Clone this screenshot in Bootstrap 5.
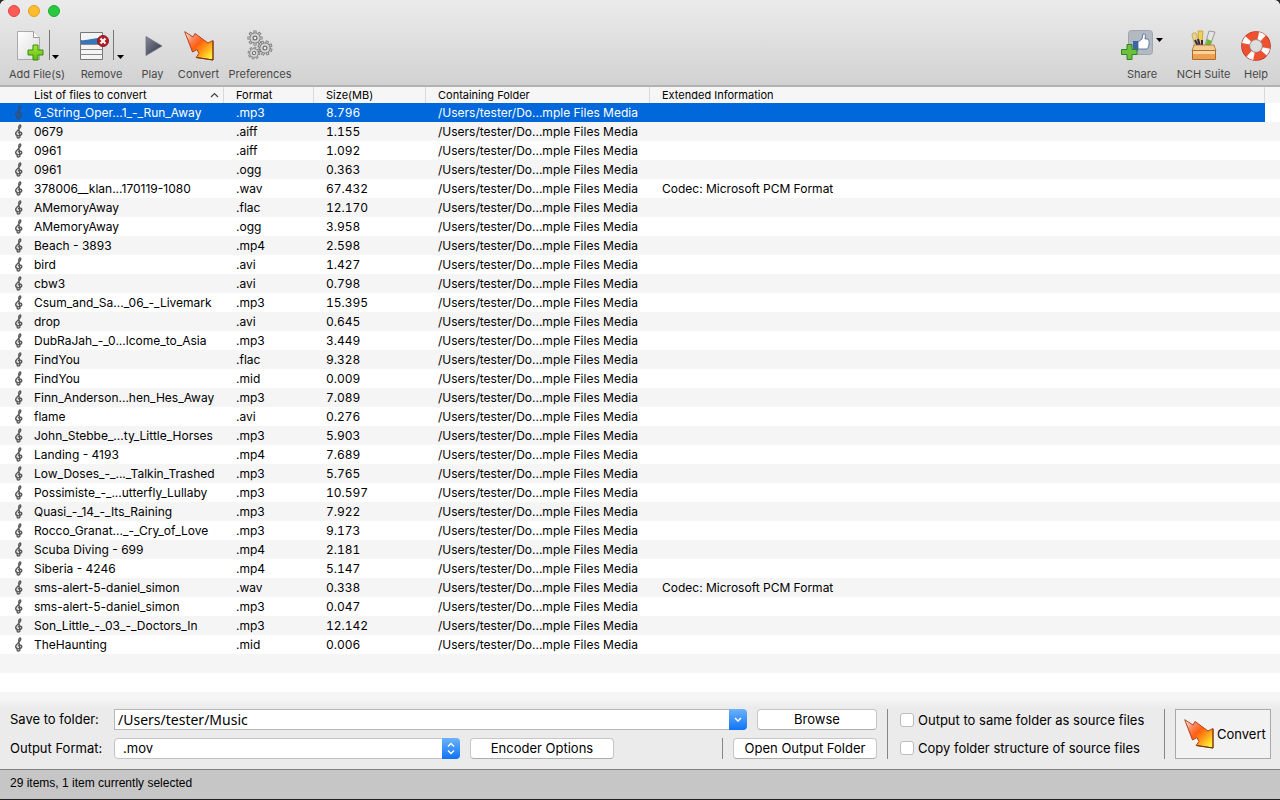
<!DOCTYPE html>
<html lang="en">
<head>
<meta charset="utf-8">
<meta name="viewport" content="width=device-width, initial-scale=1">
<title>File Converter</title>
<link href="https://cdn.jsdelivr.net/npm/bootstrap@5.3.0/dist/css/bootstrap.min.css" rel="stylesheet">
<style>
  body { font-family: Inter, "Liberation Sans", sans-serif; font-size: 13px; line-height: 19px; color: #000; background: #2b2b30; }
  .app-window { min-height: 100vh; border-radius: 6px 6px 0 0; overflow: hidden; border-bottom: 1px solid #222; background: #ececec; }
  .app-head { background: linear-gradient(#ebebeb, #d2d2d2); border-bottom: 2px solid #b2b2b2; height: 87px; }
  .lights { padding: 5px 8px 0; gap: 8px; }
  .light { width: 12px; height: 12px; border-radius: 50%; border: 1px solid; padding: 0; }
  .light-close { background: #fc5b57; border-color: #e24640; }
  .light-min { background: #fdbc2e; border-color: #e0a023; }
  .light-max { background: #28c840; border-color: #1dad2b; }
  .tools { padding: 11px 4px 0 0; }
  .tool { border: 0; padding: 0; background: none; color: #484848; font-size: 11px; line-height: 16px; display: flex; flex-direction: column; align-items: center; white-space: nowrap; }
  .tool-art { height: 36px; margin-bottom: 2px; display: flex; align-items: center; }
  .tool svg { display: block; }
  .w-add { width: 74px; } .w-remove { width: 55px; } .w-play { width: 47px; } .w-convert { width: 45px; }
  .w-prefs { width: 78px; } .w-share { width: 58px; } .w-suite { width: 65px; } .w-help { width: 40px; }

  .file-area { background: repeating-linear-gradient(#fff 0 19px, #f5f5f5 19px 38px); background-position: 0 16px; }
  .file-table { table-layout: fixed; width: 100%; border-collapse: separate; border-spacing: 0; }
  .file-table th { height: 16px; padding: 0 0 0 12px; font-size: 11px; line-height: 16px; font-weight: 400; background: #f6f6f6; border-right: 1px solid #d9d9d9; }
  .file-table th:last-child { border-right: 0; }
  .file-table td { height: 19px; padding: 1px 0 0 12px; line-height: 18px; font-size: 12px; white-space: nowrap; overflow: hidden; }
  .file-table td:nth-child(3) { font-variant-numeric: tabular-nums; }
  .file-table th:first-child { padding-left: 34px; }
  .file-table td:first-child { padding-left: 14px; }
  .file-table tbody tr:nth-child(even) { background: #f5f5f5; }
  .file-table tbody tr:nth-child(odd) { background: #fff; }
  .file-table tr.chosen td { background: #0068da; color: #fff; }
  .file-table tr.chosen td:last-child { background: #fff; }
  .clef { width: 10px; height: 15px; margin-right: 10px; vertical-align: -3px; fill: none; stroke: #5a5a5a; }
  .chosen .clef { stroke: #33507c; }
  .c-name { width: 224px; } .c-format { width: 90px; } .c-size { width: 112px; } .c-folder { width: 224px; } .c-end { width: 15px; }

  .save-panel { background: linear-gradient(#f6f6f6, #ebebeb 10px); padding: 11px 9px 10px 10px; gap: 10px; }
  .field-name { width: 94px; }
  .field-line { height: 21px; gap: 10px; }
  .path-box { border: 1px solid #b8b8b8; border-right: 0; height: 21px; padding: 0 3px; font: 14px/19px "Noto Sans", sans-serif; min-width: 0; }
  .blue-end { width: 18px; height: 21px; border: 0; padding: 0; background: linear-gradient(#6bb3fa, #0f73f8); border-radius: 0 4px 4px 0; display: flex; align-items: center; justify-content: center; }
  .format-wrap { width: 346px; }
  .format-pick { appearance: none; width: 100%; height: 21px; border: 1px solid #c3c3c3; border-radius: 4px; background: #fff; padding: 0 8px; font-size: 13px; }
  .format-wrap .blue-end { pointer-events: none; }
  .push { height: 21px; border: 1px solid #c6c6c6; border-bottom-color: #adadad; border-radius: 4px; background: #fff; font-size: 13px; line-height: 17px; padding: 0; color: #000; }
  .push-wide { width: 144px; } .push-slim { width: 120px; }
  .divider { width: 1px; background: #868686; }
  .check-group { width: 256px; gap: 8px; padding: 1px 0 0 2px; }
  .check-line { gap: 4px; height: 20px; line-height: 20px; white-space: nowrap; }
  .tick { appearance: none; width: 14px; height: 14px; border: 1px solid #bcbcbc; border-radius: 3px; background: #fff; margin: 0; }
  .tick:checked { background: #0f73f8; }
  .go { width: 96px; height: 50px; border: 1px solid #a9a9a9; background: #f2f2f2; font-size: 13px; padding: 0 8px; gap: 3px; color: #000; }
  .status { background: #c6c6c6; border-top: 1px solid #818181; height: 30px; line-height: 27px; padding-left: 10px; font-family: "Liberation Sans", Arial, sans-serif; font-size: 12px; }
</style>
</head>
<body>
<svg width="0" height="0" class="position-absolute" aria-hidden="true">
  <defs>
    <linearGradient id="fire" x1="0" y1="0" x2="1" y2="1"><stop offset="0" stop-color="#fff"/><stop offset=".25" stop-color="#ff8a68"/><stop offset=".45" stop-color="#ff5f10"/><stop offset=".68" stop-color="#ffa31a"/><stop offset=".9" stop-color="#ffee35"/></linearGradient>
    <linearGradient id="paper" x1="0" y1="0" x2="1" y2="1"><stop offset="0" stop-color="#fff"/><stop offset="1" stop-color="#dcdcdc"/></linearGradient>
    <linearGradient id="leaf" x1="0" y1="0" x2="0" y2="1"><stop offset="0" stop-color="#a5e83c"/><stop offset="1" stop-color="#5ebc10"/></linearGradient>
    <linearGradient id="steel" x1="0" y1="0" x2="1" y2="1"><stop offset="0" stop-color="#85899a"/><stop offset="1" stop-color="#2c3044"/></linearGradient>
    <symbol id="arrow" viewBox="0 0 30 30"><path d="M.7.7 9 6l2-3.500L24 12l5-2.500V29l-17-2.500 3-4-2-4-4.500 2.500Z" fill="url(#fire)" stroke="#b5401a" stroke-width="1" stroke-linejoin="round"/><path d="M29 10v19l-16-2.500" fill="none" stroke="#6b3413" stroke-width="1"/></symbol>
    <symbol id="clef" viewBox="0 0 10 15"><path d="M3 13.200c1 1.300 3.200.8 2.900-1L4.800 4C4.500 2 5.800.6 6.400 1c.9 1-.1 3-1.600 4.300C3 6.900 1.700 8 1.700 9.600c.1 2.700 6.100 2.800 6.100 0 0-2-3.500-2.200-3.600-.2" stroke-width="1.400"/><circle cx="3.300" cy="12.800" r=".6" stroke-width="1"/></symbol>
    <g id="gear"><path d="M0-6.300V6.300M-6.300 0H6.300M-4.500-4.500 4.500 4.500M4.500-4.500-4.500 4.500" stroke="#777" stroke-width="2.600"/><path d="M0-5.700V5.700M-5.700 0H5.700M-4-4 4 4M4-4-4 4" stroke="#d4d4d4" stroke-width="1.200"/><circle r="4.200" fill="#d0d0d0" stroke="#777" stroke-width=".7"/><circle r="3.600" fill="#d4d4d4"/><circle r="1.600" fill="#eee" stroke="#6d6d6d" stroke-width="1"/></g>
  </defs>
</svg>

<div class="app-window d-flex flex-column">
  <header class="app-head">
    <div class="lights d-flex">
      <button class="light light-close" aria-label="Close"></button>
      <button class="light light-min" aria-label="Minimise"></button>
      <button class="light light-max" aria-label="Zoom"></button>
    </div>
    <nav class="tools d-flex">
      <button class="tool w-add"><span class="tool-art">
        <svg width="44" height="36" viewBox="0 0 44 36"><path d="M2.500 3.500h16l6 6v22h-22z" fill="url(#paper)" stroke="#aaa"/><path d="M18.500 3.500v6h6" fill="#fff" stroke="#999"/><path d="M18 17h5v5h5v5h-5v5h-5v-5h-5v-5h5z" fill="url(#leaf)" stroke="#3b8c0c"/><path d="M34.500 2v30" stroke="#777"/><path d="M37 27h7l-3.500 4z"/></svg>
      </span>Add File(s)</button>
      <button class="tool w-remove"><span class="tool-art">
        <svg width="46" height="36" viewBox="0 0 46 36"><path d="M1.500 4.500h22v27h-22z" fill="#f4f4f4" stroke="#777"/><path d="M2 12c6 1 10-2 21-2v6H2z" fill="#3976b8"/><path d="M1.500 16.500h22M1.500 21.500h22M1.500 26.500h22" stroke="#888"/><circle cx="24" cy="13" r="5.500" fill="#b71c28" stroke="#8b1c24"/><path d="m21.500 10.500 5 5m0-5-5 5" stroke="#fff" stroke-width="2"/><path d="M34.500 2v30" stroke="#777"/><path d="M38 27h7l-3.500 4z"/></svg>
      </span>Remove</button>
      <button class="tool w-play"><span class="tool-art">
        <svg width="20" height="36" viewBox="0 0 20 36"><path d="m3 8.500 16 9.500-16 9.500z" fill="url(#steel)" stroke="#70747f" stroke-width=".8"/></svg>
      </span>Play</button>
      <button class="tool w-convert"><span class="tool-art"><svg width="30" height="30"><use href="#arrow"/></svg></span>Convert</button>
      <button class="tool w-prefs"><span class="tool-art">
        <svg width="28" height="36" viewBox="0 0 28 36"><use href="#gear" transform="translate(9 10) scale(1.200)"/><use href="#gear" transform="translate(19 20) rotate(20) scale(1.200)"/><use href="#gear" transform="translate(8 25) rotate(10)"/></svg>
      </span>Preferences</button>
      <button class="tool w-share ms-auto"><span class="tool-art">
        <svg width="42" height="36" viewBox="0 0 42 36"><rect x="7.500" y="2.500" width="24" height="24" rx="3" fill="#b3b9c1" stroke="#a0a6ad"/><path d="M12 13h5v10h-5z" fill="#3d64a8"/><path d="M17 14l4-3 1-5c2-1 3 1 2 5h3c2 1 1 9-1 10h-9z" fill="#fff" stroke="#3f5f98" stroke-width=".8"/><path d="M6 16.500h5v5h5v5h-5v5H6v-5H.5v-5H6z" fill="#6dc03c" stroke="#318222"/><path d="M35 10h7l-3.500 4z"/></svg>
      </span>Share</button>
      <button class="tool w-suite"><span class="tool-art">
        <svg width="28" height="36" viewBox="0 0 28 36"><path d="M2 7c0-3 5-3 5 0l1 12H5z" fill="#e7d28a" stroke="#b89b45" stroke-width=".7"/><path d="M8 3h5l-1 14H9z" fill="#f0cf52" stroke="#bd9725" stroke-width=".7"/><path d="m19 3 6 1-5 14-5-1z" fill="#e4e4e4" stroke="#888" stroke-width=".8"/><path d="M17 11l5 2-2 5-4-1z" fill="#67b92e"/><path d="M5 12l3 6M8 11l2 7M12 12v6" stroke="#33264c" stroke-width="2"/><path d="M4 17h20l2 6H2z" fill="#f3ca91" stroke="#ab6d2b" stroke-width=".8"/><path d="M2.500 22.500h23v9h-23z" fill="#f8d49a" stroke="#ab6d2b"/><path d="M3 26h22v5H3z" fill="#eea251"/></svg>
      </span>NCH Suite</button>
      <button class="tool w-help"><span class="tool-art">
        <svg width="30" height="32" viewBox="0 0 30 32"><circle cx="15" cy="16" r="10.500" fill="none" stroke="#a82d1a" stroke-width="8.600"/><circle cx="15" cy="16" r="10.500" fill="none" stroke="#ee5130" stroke-width="7.400"/><circle cx="15" cy="16" r="10.500" fill="none" stroke="#fafafa" stroke-width="7.600" stroke-dasharray="5.500 11" stroke-dashoffset="-2"/><circle cx="15" cy="16" r="6.200" fill="none" stroke="#a9a9a9" stroke-width=".8"/></svg>
      </span>Help</button>
    </nav>
  </header>

  <main class="file-area flex-grow-1">
    <table class="file-table">
      <colgroup><col class="c-name"><col class="c-format"><col class="c-size"><col class="c-folder"><col><col class="c-end"></colgroup>
      <thead><tr>
        <th><span class="d-flex align-items-center justify-content-between pe-1">List of files to convert<svg width="9" height="6" viewBox="0 0 9 6"><path d="m1 5 3.500-3.500L8 5" fill="none" stroke="#444" stroke-width="1.200"/></svg></span></th>
        <th>Format</th><th>Size(MB)</th><th>Containing Folder</th><th>Extended Information</th><th></th>
      </tr></thead>
      <tbody id="files"></tbody>
    </table>
  </main>

  <section class="save-panel d-flex">
    <div class="d-flex flex-column flex-grow-1 justify-content-between">
      <div class="field-line d-flex align-items-center">
        <label class="field-name" for="folder">Save to folder:</label>
        <div class="d-flex flex-grow-1">
          <input class="path-box flex-grow-1" id="folder" type="text" value="/Users/tester/Music">
          <button class="blue-end" aria-label="Recent folders"><svg width="8" height="5" viewBox="0 0 8 5"><path d="m1 1 3 3 3-3" fill="none" stroke="#fff" stroke-width="1.500"/></svg></button>
        </div>
        <button class="push push-slim">Browse</button>
      </div>
      <div class="field-line d-flex align-items-center">
        <label class="field-name" for="format">Output Format:</label>
        <div class="format-wrap position-relative">
          <select class="format-pick" id="format"><option>.mov</option></select>
          <span class="blue-end position-absolute top-0 end-0"><svg width="8" height="13" viewBox="0 0 8 13"><path d="m1 4.500 3-3 3 3m-6 4 3 3 3-3" fill="none" stroke="#fff" stroke-width="1.400"/></svg></span>
        </div>
        <button class="push push-wide">Encoder Options</button>
        <span class="divider align-self-stretch ms-auto"></span>
        <button class="push push-wide">Open Output Folder</button>
      </div>
    </div>
    <span class="divider"></span>
    <div class="check-group d-flex flex-column">
      <label class="check-line d-flex align-items-center"><input class="tick" type="checkbox">Output to same folder as source files</label>
      <label class="check-line d-flex align-items-center"><input class="tick" type="checkbox">Copy folder structure of source files</label>
    </div>
    <span class="divider"></span>
    <button class="go d-flex align-items-center"><svg width="30" height="30" class="flex-shrink-0"><use href="#arrow"/></svg>Convert</button>
  </section>
  <footer class="status">29 items, 1 item currently selected</footer>
</div>

<script>
  const folder = "/Users/tester/Do...mple Files Media";
  const pcm = "Codec: Microsoft PCM Format";
  const files = [
    ["6_String_Oper...1_-_Run_Away", ".mp3", "8.796"],
    ["0679", ".aiff", "1.155"],
    ["0961", ".aiff", "1.092"],
    ["0961", ".ogg", "0.363"],
    ["378006__klan...170119-1080", ".wav", "67.432", pcm],
    ["AMemoryAway", ".flac", "12.170"],
    ["AMemoryAway", ".ogg", "3.958"],
    ["Beach - 3893", ".mp4", "2.598"],
    ["bird", ".avi", "1.427"],
    ["cbw3", ".avi", "0.798"],
    ["Csum_and_Sa..._06_-_Livemark", ".mp3", "15.395"],
    ["drop", ".avi", "0.645"],
    ["DubRaJah_-_0...lcome_to_Asia", ".mp3", "3.449"],
    ["FindYou", ".flac", "9.328"],
    ["FindYou", ".mid", "0.009"],
    ["Finn_Anderson...hen_Hes_Away", ".mp3", "7.089"],
    ["flame", ".avi", "0.276"],
    ["John_Stebbe_...ty_Little_Horses", ".mp3", "5.903"],
    ["Landing - 4193", ".mp4", "7.689"],
    ["Low_Doses_-_..._Talkin_Trashed", ".mp3", "5.765"],
    ["Possimiste_-_...utterfly_Lullaby", ".mp3", "10.597"],
    ["Quasi_-_14_-_Its_Raining", ".mp3", "7.922"],
    ["Rocco_Granat..._-_Cry_of_Love", ".mp3", "9.173"],
    ["Scuba Diving - 699", ".mp4", "2.181"],
    ["Siberia - 4246", ".mp4", "5.147"],
    ["sms-alert-5-daniel_simon", ".wav", "0.338", pcm],
    ["sms-alert-5-daniel_simon", ".mp3", "0.047"],
    ["Son_Little_-_03_-_Doctors_In", ".mp3", "12.142"],
    ["TheHaunting", ".mid", "0.006"]
  ];
  document.getElementById("files").innerHTML = files.map(([name, format, size, info = ""], i) =>
    `<tr${i === 0 ? ' class="chosen"' : ""}><td><svg class="clef"><use href="#clef"/></svg>${name}</td><td>${format}</td><td>${size}</td><td>${folder}</td><td>${info}</td><td></td></tr>`
  ).join("");
</script>
<script src="https://cdn.jsdelivr.net/npm/bootstrap@5.3.0/dist/js/bootstrap.bundle.min.js"></script>
</body>
</html>
